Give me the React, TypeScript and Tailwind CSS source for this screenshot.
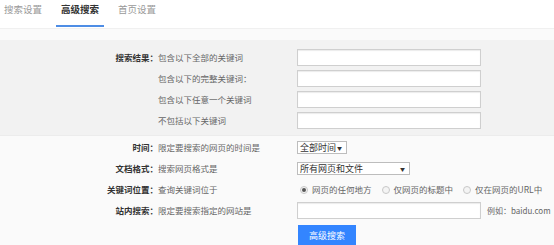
import React from "react"

const font = { fontFamily: '"Noto Sans CJK SC", "Noto Sans", sans-serif' }

function Row({ label, desc, children }: { label?: string; desc: string; children: React.ReactNode }) {
  return (
    <div className="flex h-[21px] items-center whitespace-nowrap">
      <div className="w-[158px] shrink-0 text-right font-bold text-[#333]">{label}</div>
      <div className="w-[139px] shrink-0 text-[#666]">{desc}</div>
      <div className="flex items-center">{children}</div>
    </div>
  )
}

function TextBox() {
  return <div className="h-[17px] w-[184px] border border-[#cfcfcf] bg-white shadow-[inset_0_1px_1px_rgba(0,0,0,0.08)]" />
}

function Select({ label, width }: { label: string; width: string }) {
  return (
    <div className={`flex h-[13px] items-center justify-between border border-[#bdbdbd] bg-white pl-[2px] pr-[4px] text-[9px] leading-none text-[#333] ${width}`}>
      <span>{label}</span>
      <span className="text-[5px]">▼</span>
    </div>
  )
}

function Radio({ checked, label }: { checked?: boolean; label: string }) {
  return (
    <label className="flex items-center gap-[4px] text-[#666]">
      <span className="flex h-[8px] w-[8px] items-center justify-center rounded-full border border-[#c8c8c8] bg-[#f4f4f4]">
        {checked && <span className="h-[4px] w-[4px] rounded-full bg-[#555]" />}
      </span>
      {label}
    </label>
  )
}

export default function App() {
  return (
    <div className="h-[245px] w-[554px] overflow-hidden bg-[#fafafa] text-[8.5px] leading-none" style={font}>
      <div className="flex h-[29px] items-end gap-[19px] border-b border-[#f0f0f0] bg-white pl-[4px]">
        <div className="pb-[14px] text-[9.5px] text-[#999]">搜索设置</div>
        <div className="relative pb-[14px] text-[9.5px] font-bold text-[#333]">
          高级搜索
          <div className="absolute bottom-[1px] left-[-5px] right-[-5px] h-[2px] bg-[#4e8de5]" />
        </div>
        <div className="pb-[14px] text-[9.5px] text-[#999]">首页设置</div>
      </div>
      <div className="h-[11px]" />
      <div className="border-b border-[#ececec] bg-[#f2f2f2] pb-[4px] pt-[7px]">
        <Row label="搜索结果：" desc="包含以下全部的关键词">
          <TextBox />
        </Row>
        <Row desc="包含以下的完整关键词：">
          <TextBox />
        </Row>
        <Row desc="包含以下任意一个关键词">
          <TextBox />
        </Row>
        <Row desc="不包括以下关键词">
          <TextBox />
        </Row>
      </div>
      <div className="pt-[1px]">
        <Row label="时间：" desc="限定要搜索的网页的时间是">
          <Select label="全部时间" width="w-[50px]" />
        </Row>
        <Row label="文档格式：" desc="搜索网页格式是">
          <Select label="所有网页和文件" width="w-[113px]" />
        </Row>
        <Row label="关键词位置：" desc="查询关键词位于">
          <div className="flex items-center gap-[10px] pl-[3px]">
            <Radio checked label="网页的任何地方" />
            <Radio label="仅网页的标题中" />
            <Radio label="仅在网页的URL中" />
          </div>
        </Row>
        <Row label="站内搜索：" desc="限定要搜索指定的网站是">
          <div className="flex items-center gap-[6px]">
            <TextBox />
            <span className="text-[8px] text-[#666]">例如：baidu.com</span>
          </div>
        </Row>
        <div className="pl-[298px] pt-[4px]">
          <div className="flex h-[20px] w-[58px] items-center justify-center bg-[#3385ff] text-[9px] text-white">
            高级搜索
          </div>
        </div>
      </div>
    </div>
  )
}
